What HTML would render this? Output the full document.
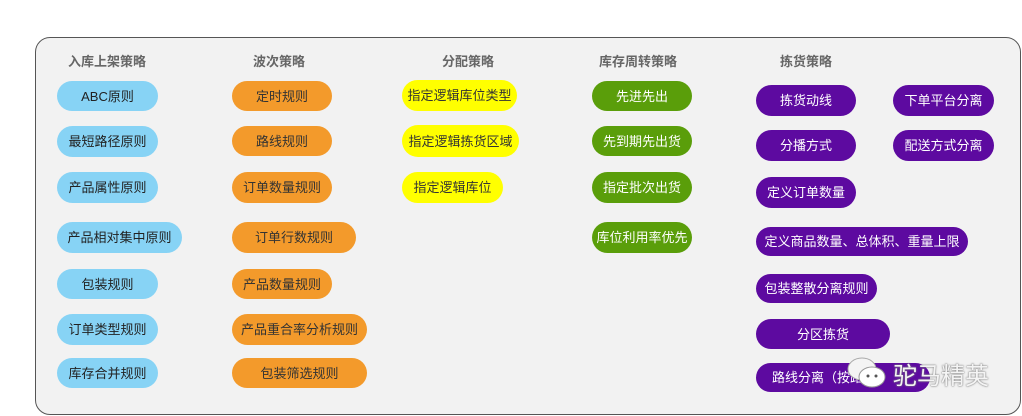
<!DOCTYPE html>
<html><head><meta charset="utf-8"><style>
body{margin:0;width:1022px;height:416px;background:#fff;position:relative;overflow:hidden;font-family:"Liberation Sans","Noto Sans CJK SC",sans-serif;}
.panel{position:absolute;left:35px;top:37px;width:986px;height:378px;background:#f2f2f2;border:1px solid #555;border-radius:15px;box-sizing:border-box;}
.h{position:absolute;top:54px;font-size:13px;color:#666;font-weight:bold;transform:translateX(-50%);white-space:nowrap;line-height:16px;}
.p{position:absolute;border-radius:16px;font-size:13px;display:flex;align-items:center;justify-content:center;white-space:nowrap;box-sizing:border-box;padding-bottom:2px;}
.b{background:#87d3f5;color:#222;}
.o{background:#f39a2b;color:#333;}
.y{background:#ffff00;color:#333;}
.g{background:#5a9e0a;color:#fff;}
.u{background:#5d0aa0;color:#fff;}
.wm{position:absolute;left:893px;top:356px;font-size:24px;color:#f4f4f4;text-shadow:0 0 2px #888,0 0 1px #666;}
</style></head><body>
<div class="panel"></div>
<div class="h" style="left:107px">入库上架策略</div>
<div class="h" style="left:279px">波次策略</div>
<div class="h" style="left:468px">分配策略</div>
<div class="h" style="left:638px">库存周转策略</div>
<div class="h" style="left:806px">拣货策略</div>

<div class="p b" style="left:57px;top:81px;width:101px;height:30px">ABC原则</div>
<div class="p b" style="left:57px;top:126px;width:101px;height:31px">最短路径原则</div>
<div class="p b" style="left:57px;top:172px;width:101px;height:31px">产品属性原则</div>
<div class="p b" style="left:57px;top:222px;width:125px;height:31px">产品相对集中原则</div>
<div class="p b" style="left:57px;top:269px;width:101px;height:30px">包装规则</div>
<div class="p b" style="left:57px;top:314px;width:101px;height:31px">订单类型规则</div>
<div class="p b" style="left:57px;top:358px;width:101px;height:30px">库存合并规则</div>

<div class="p o" style="left:232px;top:81px;width:100px;height:30px">定时规则</div>
<div class="p o" style="left:232px;top:126px;width:100px;height:30px">路线规则</div>
<div class="p o" style="left:232px;top:172px;width:100px;height:31px">订单数量规则</div>
<div class="p o" style="left:232px;top:222px;width:124px;height:31px">订单行数规则</div>
<div class="p o" style="left:232px;top:269px;width:100px;height:30px">产品数量规则</div>
<div class="p o" style="left:232px;top:314px;width:135px;height:31px">产品重合率分析规则</div>
<div class="p o" style="left:232px;top:358px;width:135px;height:30px">包装筛选规则</div>

<div class="p y" style="left:402px;top:80px;width:115px;height:31px">指定逻辑库位类型</div>
<div class="p y" style="left:402px;top:125px;width:117px;height:32px">指定逻辑拣货区域</div>
<div class="p y" style="left:402px;top:172px;width:101px;height:31px">指定逻辑库位</div>

<div class="p g" style="left:592px;top:81px;width:100px;height:30px">先进先出</div>
<div class="p g" style="left:592px;top:126px;width:100px;height:30px">先到期先出货</div>
<div class="p g" style="left:592px;top:172px;width:100px;height:31px">指定批次出货</div>
<div class="p g" style="left:592px;top:222px;width:100px;height:31px">库位利用率优先</div>

<div class="p u" style="left:756px;top:85px;width:100px;height:31px">拣货动线</div>
<div class="p u" style="left:756px;top:130px;width:100px;height:31px">分播方式</div>
<div class="p u" style="left:756px;top:177px;width:100px;height:31px">定义订单数量</div>
<div class="p u" style="left:756px;top:227px;width:212px;height:29px">定义商品数量、总体积、重量上限</div>
<div class="p u" style="left:756px;top:274px;width:121px;height:29px">包装整散分离规则</div>
<div class="p u" style="left:756px;top:319px;width:134px;height:30px">分区拣货</div>
<div class="p u" style="left:756px;top:363px;width:174px;height:29px;justify-content:flex-start;padding-left:16px">路线分离（按路线）</div>
<div class="p u" style="left:893px;top:85px;width:101px;height:31px">下单平台分离</div>
<div class="p u" style="left:893px;top:130px;width:101px;height:31px">配送方式分离</div>

<div class="wm">驼马精英</div>
<svg style="position:absolute;left:842px;top:355px" width="50" height="34"><ellipse cx="20" cy="14" rx="14" ry="11" fill="#f4f4f4" stroke="#aaa"/><ellipse cx="30" cy="22" rx="13" ry="10" fill="#fff" stroke="#999"/><circle cx="26" cy="21" r="1.5" fill="#555"/><circle cx="34" cy="21" r="1.5" fill="#555"/></svg>
</body></html>
